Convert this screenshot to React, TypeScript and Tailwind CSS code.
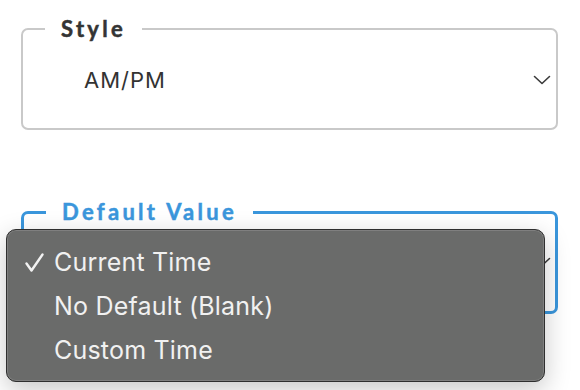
import React from 'react'

// chevron used by both selects
function Chevron() {
  return (
    <svg width="18" height="10" viewBox="0 0 18 10" fill="none" className="shrink-0">
      <path d="M1.5 1.5 L9 8.5 L16.5 1.5" stroke="#3a3a3a" strokeWidth="1.6" strokeLinecap="round" strokeLinejoin="round" />
    </svg>
  )
}

function Check() {
  return (
    <svg width="19" height="19" viewBox="0 0 19 19" fill="none">
      <path d="M1.5 10.5 L6.5 17.5 L17.5 1.5" stroke="#f2f2f2" strokeWidth="2.4" strokeLinecap="round" strokeLinejoin="round" />
    </svg>
  )
}

export default function App() {
  const options = [
    { label: 'Current Time', checked: true },
    { label: 'No Default (Blank)', checked: false },
    { label: 'Custom Time', checked: false },
  ]

  return (
    <div className="relative h-[390px] w-[580px] overflow-hidden bg-white pt-[15px]">
      {/* style select */}
      <fieldset className="ml-[21px] h-[115px] w-[537px] rounded-[7px] border-2 border-[#c9c9c9]">
        <legend className="ml-[22px] px-4 font-['Lato',sans-serif] text-[22px] font-bold leading-[28px] tracking-[3.3px] text-[#343434] [-webkit-text-stroke:0.5px_#343434]">
          Style
        </legend>
        <div className="mt-[23px] flex h-[28px] items-center justify-between pl-[61px] pr-[5px]">
          <span className="font-['Inter',sans-serif] text-[22px] leading-[28px] tracking-[1px] text-[#333]">AM/PM</span>
          <Chevron />
        </div>
      </fieldset>

      {/* default value select */}
      <fieldset className="ml-[21px] mt-[68px] h-[116px] w-[537px] rounded-[7px] border-[3px] border-[#3a96dc]">
        <legend className="ml-[22px] px-4 font-['Lato',sans-serif] text-[22px] font-bold leading-[28px] tracking-[3.3px] text-[#3a96dc] [-webkit-text-stroke:0.5px_#3a96dc]">
          Default Value
        </legend>
        <div className="mt-[22px] flex h-[28px] items-center justify-end pr-[4px]">
          <Chevron />
        </div>
      </fieldset>

      {/* open dropdown menu */}
      <div className="absolute left-[6px] top-[229px] h-[153px] w-[539px] rounded-[10px] border border-[#2f2f2f] bg-[#6a6b6a] pl-[18px] pt-[10px] shadow-[inset_0_0_0_1px_rgba(255,255,255,0.14),0_8px_26px_rgba(0,0,0,0.22)]">
        {options.map(({ label, checked }) => (
          <div key={label} className="flex h-[44px] items-center">
            <div className="flex w-[29px] items-center">{checked && <Check />}</div>
            <span className="font-['Inter',sans-serif] text-[25px] leading-[44px] tracking-[0.2px] text-[#f1f1f1]">{label}</span>
          </div>
        ))}
      </div>
    </div>
  )
}
